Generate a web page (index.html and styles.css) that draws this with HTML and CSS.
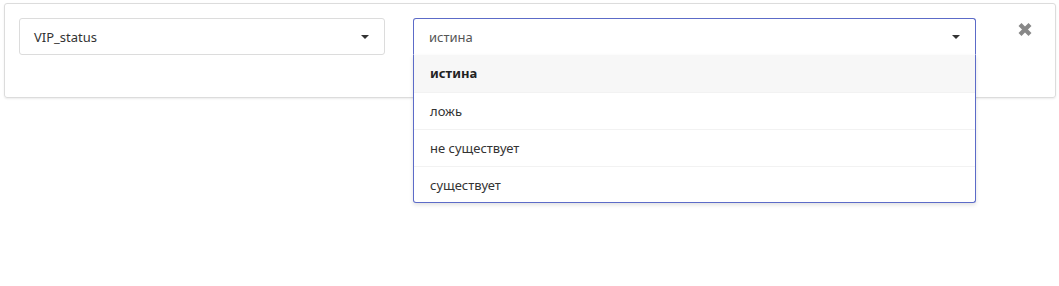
FILE: index.html
```html
<!DOCTYPE html>
<html lang="ru">
<head>
    <meta charset="UTF-8">
    <title>Фильтр</title>
    <link rel="stylesheet" href="styles.css">
</head>
<body>
<section class="filterCard">
    <div class="filterRow">
        <div class="selectBox fieldSelect">
            <span class="selectValue">VIP_status</span>
            <span class="caret"></span>
        </div>

        <div class="selectBox valueSelect open">
            <span class="selectValue muted">истина</span>
            <span class="caret"></span>
            <ul class="selectMenu">
                <li class="option active">истина</li>
                <li class="option">ложь</li>
                <li class="option">не существует</li>
                <li class="option">существует</li>
            </ul>
        </div>

        <button type="button" class="removeBtn" title="Удалить">
            <svg width="14" height="15" viewBox="0 0 14 15">
                <path d="M2 2.5 L12 12.5 M12 2.5 L2 12.5" stroke="#888" stroke-width="4.2" fill="none"/>
            </svg>
        </button>
    </div>
</section>
</body>
</html>
```

FILE: styles.css
```css
html,body{
    height:100%;
}
body{
    margin:0;
    padding:3px 3px 0 4px;
    box-sizing:border-box;
    font-family:"Noto Sans", "Open Sans", sans-serif;
    font-size:13px;
    color:#333;
    background:#fff;
}
.filterCard{
    border:1px solid #dcdcdc;
    border-radius:3px;
    box-shadow:0 1px 2px rgba(0,0,0,0.08);
    padding:14px 14px 42px;
}
.filterRow{
    display:flex;
    align-items:flex-start;
}
.selectBox{
    position:relative;
    box-sizing:border-box;
    height:37px;
    border:1px solid #dcdcdc;
    border-radius:3px;
    display:flex;
    align-items:center;
    justify-content:space-between;
    padding:0 15px 0 14px;
    background:#fff;
}
.fieldSelect{
    width:366px;
}
.valueSelect{
    width:563px;
    margin-left:28px;
    padding-left:15px;
}
.selectValue{
    color:#333;
}
.selectValue.muted{
    color:#555;
}
.caret{
    width:0;
    height:0;
    border-left:4px solid transparent;
    border-right:4px solid transparent;
    border-top:4px solid #333;
}
.valueSelect.open{
    border-color:#5c6bc8;
    border-bottom-color:transparent;
    border-radius:3px 3px 0 0;
    z-index:2;
}
.selectMenu{
    position:absolute;
    top:calc(100% + 1px);
    left:-1px;
    right:-1px;
    margin:0;
    padding:0;
    list-style:none;
    background:#fff;
    border:1px solid #5c6bc8;
    border-top:none;
    border-radius:0 0 3px 3px;
    box-shadow:0 2px 4px rgba(0,0,0,0.12);
}
.option{
    height:37px;
    line-height:36px;
    padding-left:16px;
    border-top:1px solid #f2f2f2;
    box-sizing:border-box;
    color:#333;
}
.option:first-child{
    border-top:none;
    line-height:37px;
}
.option:last-child{
    height:36px;
}
.option.active{
    background:#f7f7f7;
    font-weight:bold;
    color:#222;
}
.removeBtn{
    margin-left:auto;
    margin-right:9px;
    margin-top:4px;
    padding:0;
    border:none;
    background:none;
    line-height:0;
}
```
